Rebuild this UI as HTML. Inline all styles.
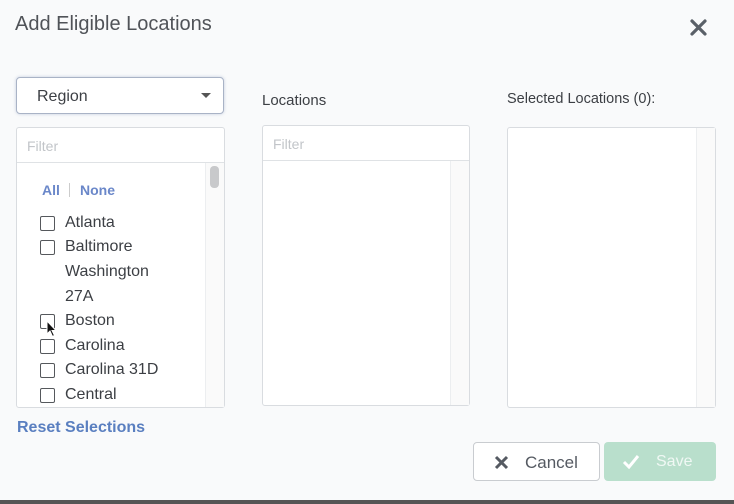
<!DOCTYPE html>
<html><head><style>
*{box-sizing:border-box;margin:0;padding:0}
body{width:734px;height:504px;background:#f9fafb;font-family:"Liberation Sans",sans-serif;position:relative;overflow:hidden;color:#3a3d42}
.a{position:absolute}
.box{position:absolute;background:#fff;border:1px solid #d9dce0;border-radius:3px}
.filter{position:absolute;left:0;right:0;top:0;height:35px;border-bottom:1px solid #dfe2e5;color:#c2c5c9;font-size:14px;padding:10px 10px}
.sb{position:absolute;top:35px;bottom:0;right:0;width:19px;border-left:1px solid #eceef0;background:#fafafa}
.item{position:absolute;left:23px;font-size:16px;color:#3c3f44}
.cb{position:absolute;left:0;top:2px;width:15px;height:15px;border:1.5px solid #55585c;border-radius:2px;background:#fff}
.item span{position:absolute;left:25px;white-space:nowrap}
</style></head><body>
<div class="a" style="left:15px;top:13px;font-size:20px;color:#505358">Add Eligible Locations</div>
<svg class="a" style="left:690px;top:19px" width="17" height="17" viewBox="0 0 17 17"><path d="M2 2L15 15M15 2L2 15" stroke="#5a6068" stroke-width="3.2" stroke-linecap="round"/></svg>

<div class="box" style="left:16px;top:77px;width:208px;height:37px;border-color:#a9b3c6;border-radius:4px;box-shadow:0 0 3px rgba(120,140,180,.4)">
<div class="a" style="left:20px;top:10px;font-size:16px;color:#3c3f44">Region</div>
<div class="a" style="left:184px;top:15px;width:0;height:0;border-left:5px solid transparent;border-right:5px solid transparent;border-top:5px solid #555"></div>
</div>

<div class="box" style="left:16px;top:127px;width:209px;height:281px">
<div class="filter">Filter</div>
<div class="sb"><div class="a" style="left:4px;top:3px;width:9px;height:22px;border-radius:4px;background:#c8c9cb"></div></div>
<div class="a" style="left:25px;top:54px;font-size:14px;color:#6a87c9;font-weight:bold">All</div>
<div class="a" style="left:52px;top:55px;width:1px;height:14px;background:#ccc"></div>
<div class="a" style="left:63px;top:54px;font-size:14px;color:#6a87c9;font-weight:bold">None</div>
<div class="item" style="top:86px"><div class="cb"></div><span>Atlanta</span></div>
<div class="item" style="top:110px"><div class="cb"></div><span>Baltimore</span></div>
<div class="item" style="top:135px"><span>Washington</span></div>
<div class="item" style="top:160px"><span>27A</span></div>
<div class="item" style="top:184px"><div class="cb"></div><span>Boston</span></div>
<div class="item" style="top:209px"><div class="cb"></div><span>Carolina</span></div>
<div class="item" style="top:233px"><div class="cb"></div><span>Carolina 31D</span></div>
<div class="item" style="top:258px"><div class="cb"></div><span>Central</span></div>
<svg class="a" style="left:29px;top:192px" width="12" height="18" viewBox="0 0 12 18"><path d="M1 1L1 14L4 11L6.5 16.5L8.5 15.5L6 10.5L10 10.5Z" fill="#111" stroke="#fff" stroke-width="1"/></svg>
</div>

<div class="a" style="left:262px;top:92px;font-size:15px;color:#3c3f44">Locations</div>
<div class="box" style="left:262px;top:125px;width:208px;height:281px">
<div class="filter">Filter</div><div class="sb"></div>
</div>

<div class="a" style="left:507px;top:91px;font-size:14.5px;color:#3c3f44">Selected Locations (0):</div>
<div class="box" style="left:507px;top:127px;width:209px;height:281px">
<div class="sb" style="top:0"></div>
</div>

<div class="a" style="left:17px;top:419px;font-size:16px;color:#5a7fc0;font-weight:bold">Reset Selections</div>

<div class="box" style="left:473px;top:442px;width:127px;height:39px;border-color:#c9ccd0;border-radius:4px">
<svg class="a" style="left:20px;top:12px" width="15" height="15" viewBox="0 0 15 15"><path d="M2 2L13 13M13 2L2 13" stroke="#555a62" stroke-width="3"/></svg>
<div class="a" style="left:51px;top:10px;font-size:17px;color:#555a62">Cancel</div>
</div>
<div class="a" style="left:604px;top:442px;width:112px;height:39px;background:#b9dfcc;border-radius:4px">
<svg class="a" style="left:18px;top:12px" width="18" height="15" viewBox="0 0 18 15"><path d="M2 8L7 13L16 2" stroke="#fff" stroke-width="3" fill="none"/></svg>
<div class="a" style="left:52px;top:11px;font-size:16px;color:#f0f8f4">Save</div>
</div>

<div class="a" style="left:0;top:500px;width:734px;height:4px;background:#555"></div>
</body></html>
